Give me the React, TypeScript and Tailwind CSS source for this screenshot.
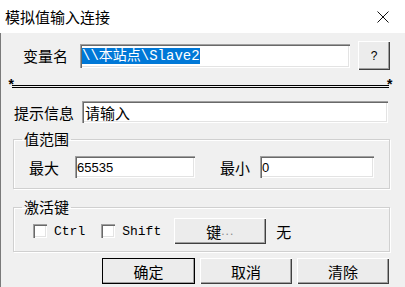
import React from "react";

const cjk = "font-['Noto_Sans_CJK_SC','Noto_Sans',sans-serif]";
const mono = "font-['Liberation_Mono','Noto_Sans_CJK_SC',monospace]";

const sunken =
  "bg-white shadow-[inset_1px_1px_0_#a0a0a0,inset_2px_2px_0_#696969,inset_-1px_-1px_0_#ffffff,inset_-2px_-2px_0_#e3e3e3]";
const raised =
  "bg-[#ececec] shadow-[inset_1px_1px_0_#ffffff,inset_-1px_-1px_0_#404040,inset_-2px_-2px_0_#a0a0a0]";

function Btn({ children, w, isDefault = false }: { children: React.ReactNode; w: string; isDefault?: boolean }) {
  return (
    <div
      className={`${w} h-[26px] flex items-center justify-center text-[15px] leading-none text-black ${cjk} ${raised} ${
        isDefault ? "outline outline-1 outline-black -outline-offset-1" : ""
      }`}
    >
      {children}
    </div>
  );
}

function Check({ label, ml }: { label: string; ml: string }) {
  return (
    <div className={`flex items-center ${ml}`}>
      <div className={`w-[14px] h-[14px] ${sunken}`} />
      <span className={`ml-[7px] text-[13px] leading-none ${mono}`}>{label}</span>
    </div>
  );
}

export default function App() {
  return (
    <div className="w-[405px] h-[287px] flex flex-col overflow-hidden bg-[#f0f0f0] text-black">
      {/* title bar */}
      <div className="h-[33px] bg-white flex items-center justify-between shrink-0">
        <span className={`pl-[5px] text-[15px] leading-none ${cjk}`}>模拟值输入连接</span>
        <svg width="12" height="12" viewBox="0 0 12 12" className="mr-[16px]">
          <path d="M0.5 0.5 L11.5 11.5 M11.5 0.5 L0.5 11.5" stroke="#111" strokeWidth="1" />
        </svg>
      </div>

      <div className="flex-1 flex flex-col border-l border-[#7a7a7a]">
        {/* 变量名 */}
        <div className="mt-[8px] h-[29px] flex items-center">
          <span className={`pl-[22px] w-[79px] text-[15px] leading-none ${cjk}`}>变量名</span>
          <div className={`w-[270px] h-[24px] flex items-center pl-[2px] ${sunken}`}>
            <span className={`bg-[#0078d7] text-white text-[14px] leading-[16px] ${mono}`}>\\本站点\Slave2</span>
          </div>
          <div className={`ml-[8px] w-[32px] h-[29px] flex items-center justify-center text-[12px] font-['Liberation_Sans',sans-serif] ${raised}`}>
            ?
          </div>
        </div>

        {/* separator */}
        <div className="mt-[9px] flex items-center pl-[6px] w-[393px]">
          <span className={`text-[14px] font-bold leading-none ${mono}`}>*</span>
          <div className="flex-1 h-[3px] border-y border-black -mx-[3px]" />
          <span className={`text-[14px] font-bold leading-none ${mono}`}>*</span>
        </div>

        {/* 提示信息 */}
        <div className="mt-[8px] h-[22px] flex items-center">
          <span className={`pl-[13px] w-[81px] text-[15px] leading-none ${cjk}`}>提示信息</span>
          <div className={`w-[306px] h-[22px] flex items-center pl-[3px] text-[15px] leading-none ${sunken} ${cjk}`}>
            请输入
          </div>
        </div>

        {/* 值范围 */}
        <fieldset className="mt-[8px] ml-[12px] w-[377px] border border-[#d0d0d0] shadow-[1px_1px_0_#ffffff,inset_1px_1px_0_#ffffff]">
          <legend className={`ml-[8px] px-[2px] text-[15px] leading-[16px] ${cjk}`}>值范围</legend>
          <div className="pt-[9px] pb-[10px] pl-[15px] flex items-center">
            <span className={`w-[46px] text-[15px] leading-none ${cjk}`}>最大</span>
            <div className={`w-[120px] h-[22px] flex items-center pl-[2px] text-[13px] leading-none font-['Liberation_Sans',sans-serif] ${sunken}`}>
              65535
            </div>
            <span className={`ml-[25px] w-[40px] text-[15px] leading-none ${cjk}`}>最小</span>
            <div className={`w-[114px] h-[22px] flex items-center pl-[2px] text-[13px] leading-none font-['Liberation_Sans',sans-serif] ${sunken}`}>
              0
            </div>
          </div>
        </fieldset>

        {/* 激活键 */}
        <fieldset className="mt-[10px] ml-[12px] w-[377px] border border-[#d0d0d0] shadow-[1px_1px_0_#ffffff,inset_1px_1px_0_#ffffff]">
          <legend className={`ml-[8px] px-[2px] text-[15px] leading-[16px] ${cjk}`}>激活键</legend>
          <div className="pt-[3px] pb-[7px] pl-[19px] flex items-center">
            <Check label="Ctrl" ml="" />
            <Check label="Shift" ml="ml-[16px]" />
            <div className="ml-[13px]">
              <Btn w="w-[92px]">
                <span>键</span>
                <span className="text-[#8a8a8a] text-[12px] font-['Liberation_Sans',sans-serif] tracking-[1px]">...</span>
              </Btn>
            </div>
            <span className={`ml-[10px] text-[15px] leading-none ${cjk}`}>无</span>
          </div>
        </fieldset>

        {/* bottom buttons */}
        <div className="mt-[6px] flex pl-[101px] gap-[5px]">
          <Btn w="w-[93px]" isDefault>确定</Btn>
          <Btn w="w-[92px]">取消</Btn>
          <Btn w="w-[92px]">清除</Btn>
        </div>
      </div>
    </div>
  );
}
